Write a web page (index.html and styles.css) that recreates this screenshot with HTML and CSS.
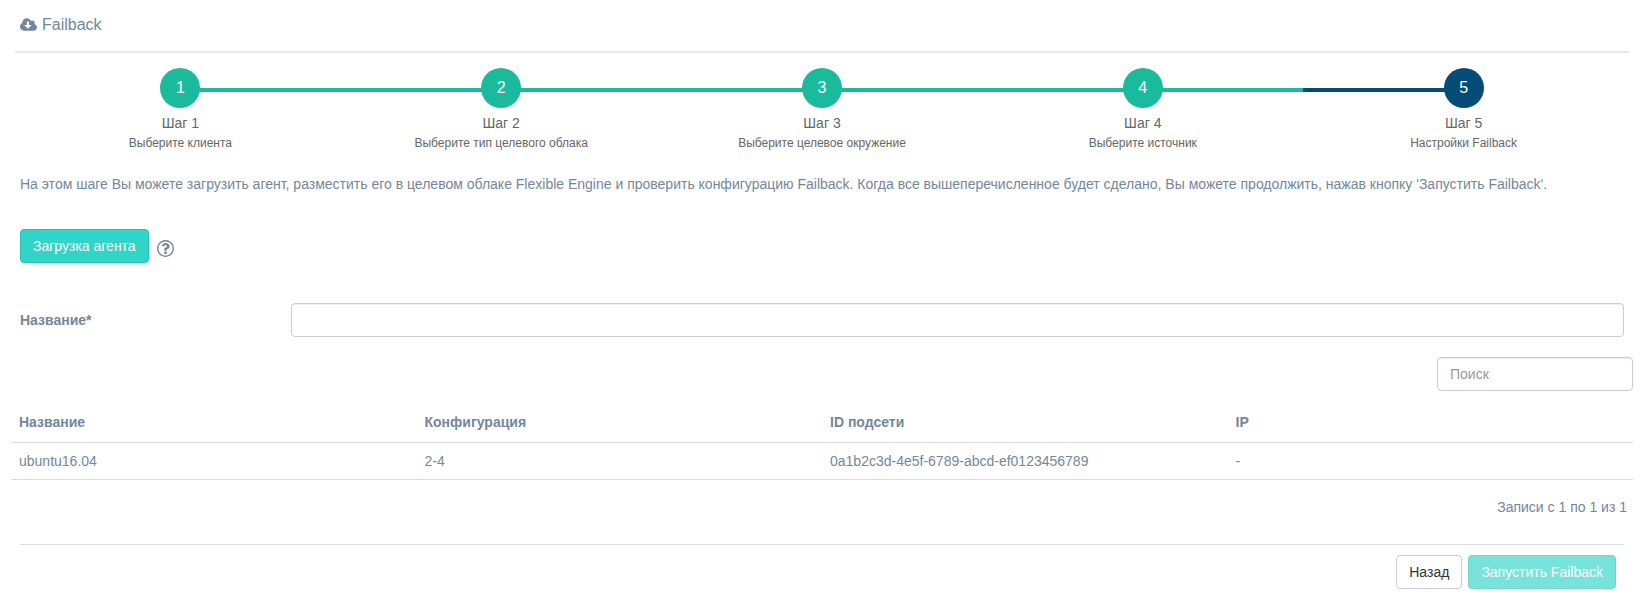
FILE: index.html
```html
<!DOCTYPE html>
<html lang="ru">
<head>
  <meta charset="UTF-8">
  <meta name="viewport" content="width=device-width, initial-scale=1.0">
  <title>Failback</title>
  <link rel="stylesheet" href="styles.css">
</head>
<body>
  <div class="panel">
    <div class="panel-title">
      <svg class="icon-cloud" viewBox="0 0 1920 1792" aria-hidden="true"><path d="M1280 928q0-14-9-23t-23-9h-224v-352q0-13-9.500-22.500t-22.500-9.500h-192q-13 0-22.500 9.500t-9.500 22.500v352h-224q-13 0-22.500 9.500t-9.500 22.500q0 14 9 23l352 352q9 9 23 9t23-9l351-351q10-12 10-24zm640 224q0 159-112.500 271.500t-271.500 112.500h-1088q-185 0-316.500-131.500t-131.500-316.500q0-130 70-240t188-165q-2-30-2-43 0-212 150-362t362-150q156 0 285.500 87t188.500 231q71-62 166-62 106 0 181 75t75 181q0 76-41 138 130 31 213.500 135.500t83.500 238.500z"/></svg>
      <h2>Failback</h2>
    </div>

    <div class="panel-content">
      <ol class="steps">
        <li class="done"><a href="#step-1"><span class="step-no">1</span><span class="step-name">Шаг 1</span><small>Выберите клиента</small></a></li>
        <li class="done"><a href="#step-2"><span class="step-no">2</span><span class="step-name">Шаг 2</span><small>Выберите тип целевого облака</small></a></li>
        <li class="done"><a href="#step-3"><span class="step-no">3</span><span class="step-name">Шаг 3</span><small>Выберите целевое окружение</small></a></li>
        <li class="done"><a href="#step-4"><span class="step-no">4</span><span class="step-name">Шаг 4</span><small>Выберите источник</small></a></li>
        <li class="selected"><a href="#step-5"><span class="step-no">5</span><span class="step-name">Шаг 5</span><small>Настройки Failback</small></a></li>
      </ol>

      <p class="intro">На этом шаге Вы можете загрузить агент, разместить его в целевом облаке Flexible Engine и проверить конфигурацию Failback. Когда все вышеперечисленное будет сделано, Вы можете продолжить, нажав кнопку 'Запустить Failback'.</p>

      <div class="agent">
        <button type="button" class="btn btn-success">Загрузка агента</button>
        <svg class="icon-help" viewBox="128 128 1536 1536" role="img" aria-label="Справка"><path d="M1008 1200v160q0 14-9 23t-23 9h-160q-14 0-23-9t-9-23v-160q0-14 9-23t23-9h160q14 0 23 9t9 23zm256-496q0 50-15 90t-45.500 69-52 44-59.500 36q-32 18-46.500 28t-26 24-11.500 29v32q0 14-9 23t-23 9h-160q-14 0-23-9t-9-23v-68q0-35 10.500-64.500t24-47.500 39-35.500 41-25.500 44.500-21q53-25 75-43t22-49q0-42-43.500-71.500t-95.500-29.500q-56 0-95 27-29 20-80 83-9 12-25 12-11 0-19-6l-108-82q-10-7-12-20t5-23q122-192 349-192 129 0 238.500 89.500t109.500 214.500zm-368-448q-130 0-248.500 51t-204 136.500-136.500 204-51 248.500 51 248.500 136.500 204 204 136.500 248.500 51 248.500-51 204-136.500 136.500-204 51-248.500-51-248.500-136.500-204-204-136.500-248.500-51zm768 640q0 209-103 385.500t-279.500 279.500-385.500 103-385.500-103-279.500-279.500-103-385.500 103-385.500 279.500-279.500 385.500-103 385.500 103 279.500 279.500 103 385.500z"/></svg>
      </div>

      <div class="form-row">
        <label for="name">Название*</label>
        <input type="text" id="name" class="form-control">
      </div>

      <div class="machines">
        <div class="toolbar">
          <input type="text" class="form-control search" placeholder="Поиск" aria-label="Поиск">
        </div>
        <table>
          <thead>
            <tr>
              <th>Название</th>
              <th>Конфигурация</th>
              <th>ID подсети</th>
              <th>IP</th>
            </tr>
          </thead>
          <tbody>
            <tr>
              <td>ubuntu16.04</td>
              <td>2-4</td>
              <td>0a1b2c3d-4e5f-6789-abcd-ef0123456789</td>
              <td>-</td>
            </tr>
          </tbody>
        </table>
        <div class="records">Записи с 1 по 1 из 1</div>
      </div>

      <div class="actions">
        <button type="button" class="btn btn-default">Назад</button>
        <button type="button" class="btn btn-success" disabled>Запустить Failback</button>
      </div>
    </div>
  </div>
</body>
</html>
```

FILE: styles.css
```css
* {
  box-sizing: border-box;
}
body {
  margin: 0;
  font-family: "Liberation Sans", Arial, sans-serif;
  font-size: 14px;
  line-height: 20px;
  color: #73879c;
  background: #fff;
}
.panel {
  padding: 0 11px 0 15px;
}
.panel-title {
  display: flex;
  align-items: center;
  gap: 5px;
  padding: 15px 5px 16px;
  border-bottom: 2px solid #e6e9ed;
}
.panel-title h2 {
  margin: 0;
  font-size: 16px;
  font-weight: normal;
}
.icon-cloud {
  width: 17px;
  height: 16px;
  fill: currentColor;
}
.panel-content {
  padding: 0 5px;
}

/* wizard steps */
.steps {
  display: flex;
  margin: 15px 0 0;
  padding: 0;
  list-style: none;
}
.steps li {
  position: relative;
  flex: 1;
}
.steps li::before {
  content: "";
  position: absolute;
  top: 20px;
  left: 0;
  width: 100%;
  height: 4px;
  background: #1abb9c;
}
.steps li:first-child::before {
  left: 50%;
  width: 50%;
}
.steps li:last-child::before {
  width: 50%;
}
.steps .selected::before,
.steps .selected .step-no {
  background: #034c75;
}
.steps a {
  position: relative;
  display: flex;
  flex-direction: column;
  align-items: center;
  color: #666;
  text-decoration: none;
}
.step-no {
  width: 40px;
  height: 40px;
  margin-bottom: 5px;
  border-radius: 50%;
  background: #1abb9c;
  color: #fff;
  font-size: 16px;
  line-height: 40px;
  text-align: center;
}
.steps small {
  font-size: 12px;
}

.intro {
  margin: 21px 0 35px;
}

/* buttons */
.btn {
  height: 34px;
  padding: 6px 12px;
  border: 1px solid transparent;
  border-radius: 4px;
  font-family: inherit;
  font-size: 14px;
  line-height: 20px;
  cursor: pointer;
}
.btn-default {
  background: #fff;
  border-color: #ccc;
  color: #333;
}
.btn-success {
  background: #30d5c8;
  border-color: #27bfb3;
  color: #fff;
}
.btn:disabled {
  opacity: 0.65;
  cursor: not-allowed;
}
.agent {
  display: flex;
  align-items: center;
  gap: 8px;
  margin-bottom: 40px;
}
.icon-help {
  width: 17px;
  height: 17px;
  margin-top: 4px;
  fill: currentColor;
}

/* inputs */
.form-row {
  display: flex;
  align-items: center;
}
.form-row label {
  flex: 0 0 271px;
  font-weight: bold;
}
.form-control {
  width: 100%;
  height: 34px;
  padding: 6px 12px;
  border: 1px solid #ccc;
  border-radius: 4px;
  box-shadow: inset 0 1px 1px rgba(0, 0, 0, 0.075);
  background: #fff;
  color: #555;
  font-family: inherit;
  font-size: 14px;
}
.form-control::placeholder {
  color: #999;
}
.search {
  width: 196px;
}

/* machines table */
.machines {
  margin: 20px -9px 0;
}
.toolbar {
  display: flex;
  justify-content: flex-end;
  margin-bottom: 13px;
}
table {
  width: 100%;
  table-layout: fixed;
  border-spacing: 0;
}
th,
td {
  padding: 8px;
  border-bottom: 1px solid #ddd;
  text-align: left;
}
th {
  padding-bottom: 10px;
}
.records {
  padding: 17px 6px 0;
  text-align: right;
}

.actions {
  display: flex;
  justify-content: flex-end;
  gap: 6px;
  margin-top: 27px;
  padding: 10px 8px 0;
  border-top: 1px solid #ddd;
}
```
